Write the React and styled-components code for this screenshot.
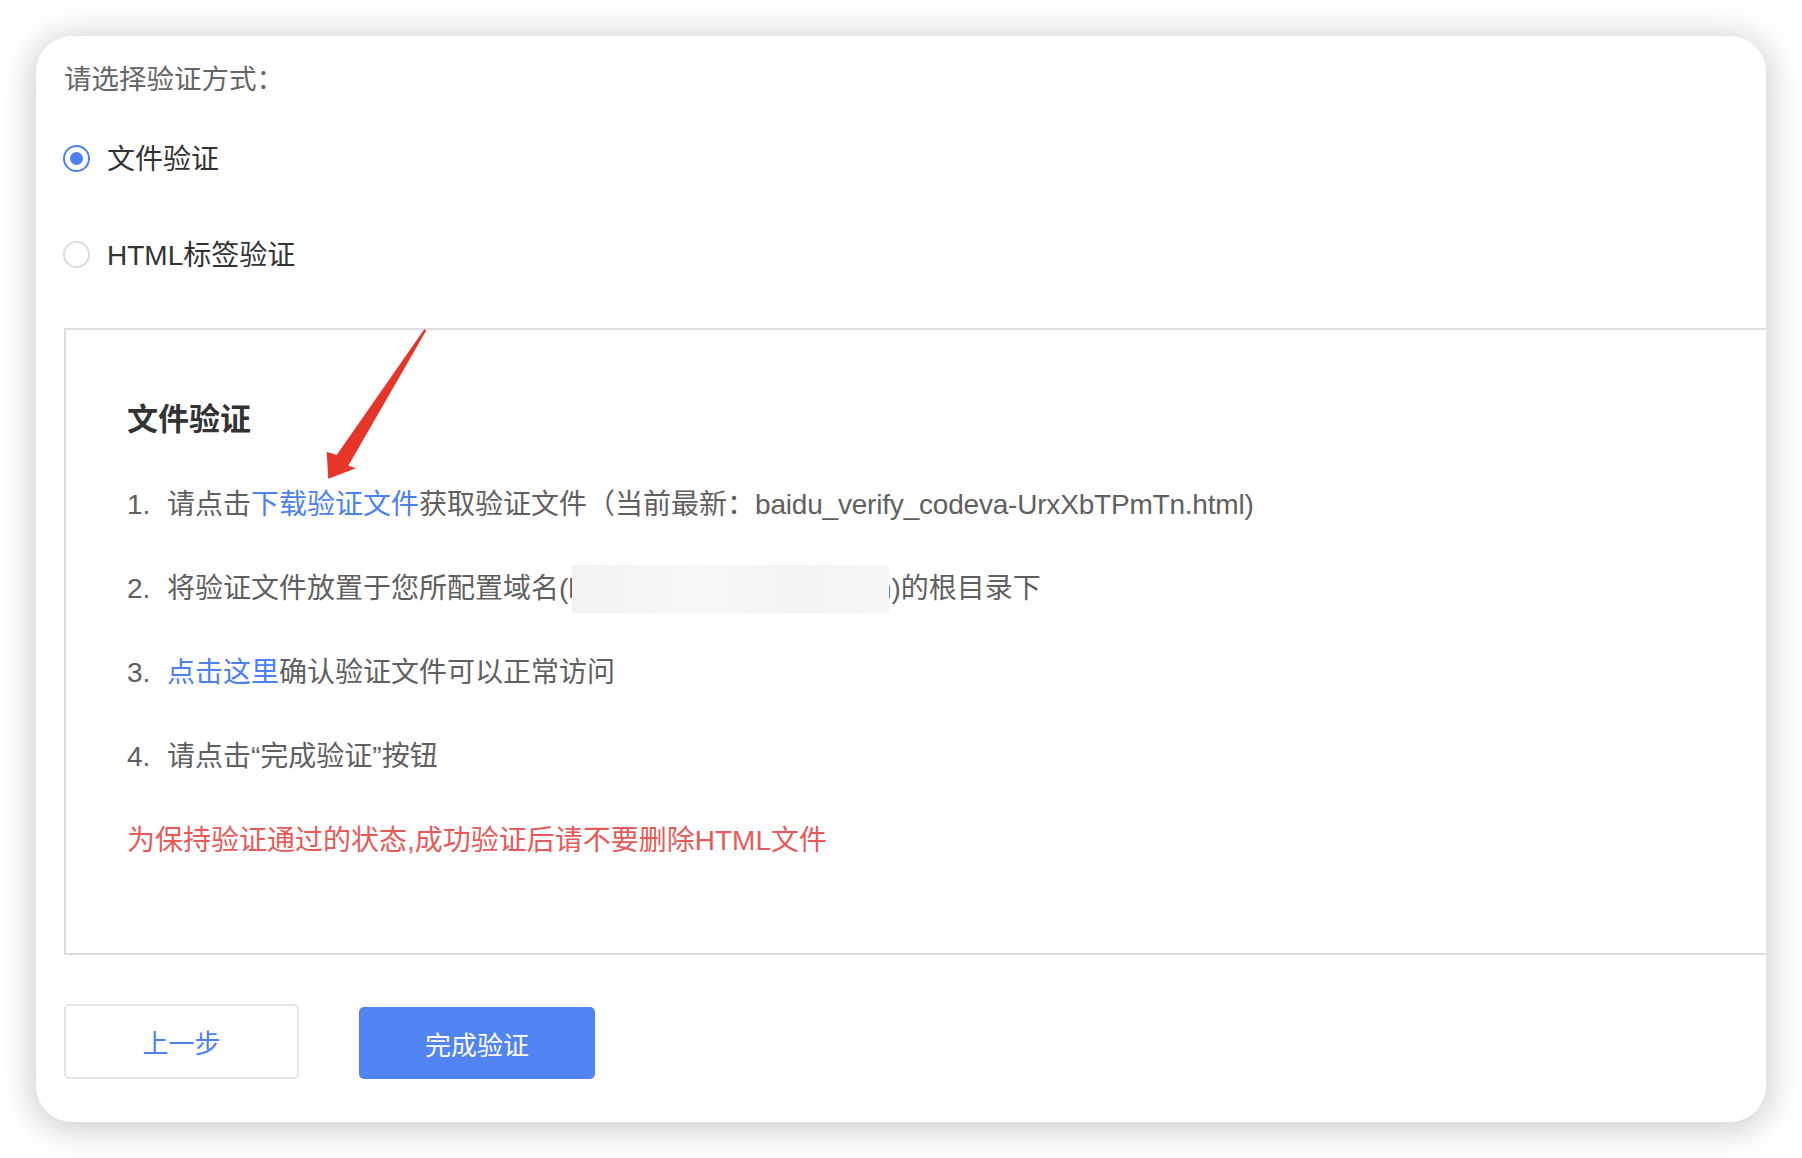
import React from 'react';
import styled, { createGlobalStyle } from 'styled-components';

const GlobalStyle = createGlobalStyle`
  html, body {
    margin: 0;
    padding: 0;
    background: #fff;
  }
  body {
    font-family: "Liberation Sans", "Noto Sans CJK SC", sans-serif;
  }
`;

const Page = styled.div`
  width: 1802px;
  height: 1158px;
  padding: 36px 0 0 36px;
  box-sizing: border-box;
`;

const Card = styled.div`
  position: relative;
  width: 1730px;
  height: 1086px;
  box-sizing: border-box;
  padding: 24px 0 0 28px;
  background: #fff;
  border-radius: 36px;
  box-shadow: 0 4px 34px 4px rgba(0, 0, 0, 0.2);
  overflow: hidden;
`;

const Prompt = styled.div`
  font-size: 27.5px;
  line-height: 40px;
  color: #666;
`;

const RadioGroup = styled.div`
  display: flex;
  flex-direction: column;
  gap: 48px;
  margin-top: 33px;
`;

const RadioRow = styled.label`
  display: flex;
  align-items: center;
  height: 48px;
  gap: 17px;
  font-size: 28px;
  color: #333;
`;

const Dot = styled.span`
  width: 27px;
  height: 27px;
  box-sizing: border-box;
  border-radius: 50%;
  border: 2px solid ${(p) => (p.checked ? '#4d80f0' : '#dcdcdc')};
  display: flex;
  align-items: center;
  justify-content: center;
  margin-left: -1px;
  margin-top: 2px;

  &::after {
    content: '';
    width: 13px;
    height: 13px;
    border-radius: 50%;
    background: #4d80f0;
    display: ${(p) => (p.checked ? 'block' : 'none')};
  }
`;

const Panel = styled.div`
  margin-top: 51px;
  margin-right: -6px;
  border: 2px solid #dedede;
  padding: 68px 0 70px 61px;
`;

const Title = styled.h3`
  margin: 0;
  font-size: 31px;
  line-height: 44px;
  font-weight: bold;
  color: #333;
`;

const Steps = styled.ol`
  list-style: none;
  margin: 21px 0 0;
  padding: 0;
`;

const Step = styled.li`
  font-size: 28px;
  line-height: 84px;
  height: 84px;
  color: #606060;
  white-space: nowrap;
`;

const Num = styled.span`
  display: inline-block;
  width: 40px;
`;

const FileName = styled.span`
  letter-spacing: -0.2px;
`;

const Link = styled.a`
  color: #4d80f0;
  text-decoration: none;
  cursor: pointer;
`;

const Masked = styled.span`
  position: relative;
  display: inline-block;
  vertical-align: middle;
  width: 317px;
  height: 48px;
  margin: -4px -13px 0 -12px;
  background: linear-gradient(90deg, #f3f3f3, #f7f7f7 40%, #f4f4f4 70%, #f6f6f6);
`;

const Warning = styled.p`
  margin: 0;
  font-size: 28px;
  line-height: 84px;
  color: #e85a5a;
`;

const Actions = styled.div`
  display: flex;
  align-items: flex-end;
  gap: 60px;
  margin-top: 49px;
`;

const Button = styled.button`
  box-sizing: border-box;
  width: ${(p) => (p.primary ? '236px' : '235px')};
  height: ${(p) => (p.primary ? '72px' : '75px')};
  border-radius: 5px;
  border: ${(p) => (p.primary ? 'none' : '2px solid #e6e6e6')};
  background: ${(p) => (p.primary ? '#5284f1' : '#fff')};
  color: ${(p) => (p.primary ? '#fff' : '#4d80f0')};
  font-family: inherit;
  font-size: 26px;
  cursor: pointer;
`;

const Arrow = styled.svg`
  position: absolute;
  left: 284px;
  top: 289px;
  width: 110px;
  height: 160px;
  pointer-events: none;
`;

const App = () => {
  return (
    <Page>
      <GlobalStyle />
      <Card>
        <Prompt>请选择验证方式：</Prompt>
        <RadioGroup>
          <RadioRow>
            <Dot checked />
            文件验证
          </RadioRow>
          <RadioRow>
            <Dot />
            HTML标签验证
          </RadioRow>
        </RadioGroup>

        <Panel>
          <Title>文件验证</Title>
          <Steps>
            <Step>
              <Num>1.</Num>请点击<Link>下载验证文件</Link>获取验证文件（当前最新：<FileName>baidu_verify_codeva-UrxXbTPmTn.html)</FileName>
            </Step>
            <Step>
              <Num>2.</Num>将验证文件放置于您所配置域名(h<Masked />n)的根目录下
            </Step>
            <Step>
              <Num>3.</Num><Link>点击这里</Link>确认验证文件可以正常访问
            </Step>
            <Step>
              <Num>4.</Num>请点击“完成验证”按钮
            </Step>
          </Steps>
          <Warning>为保持验证通过的状态,成功验证后请不要删除HTML文件</Warning>
        </Panel>

        <Actions>
          <Button>上一步</Button>
          <Button primary>完成验证</Button>
        </Actions>

        <Arrow viewBox="0 0 110 160">
          <polygon
            points="104.3,4.3 106.2,5.6 28.3,140.7 36,143.3 8.3,153.7 6.7,126.7 16.7,130"
            fill="#e8352a"
          />
        </Arrow>
      </Card>
    </Page>
  );
};

export default App;
